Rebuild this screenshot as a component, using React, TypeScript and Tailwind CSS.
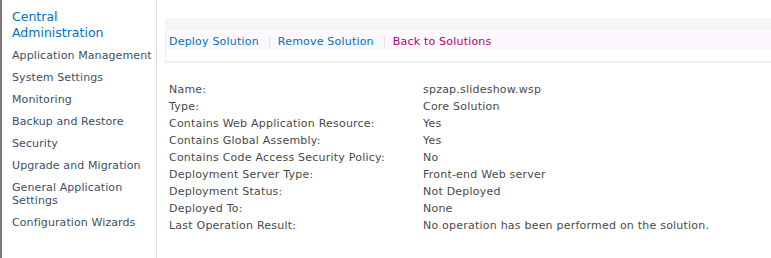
import React from "react";

const navItems: string[] = [
  "Application Management",
  "System Settings",
  "Monitoring",
  "Backup and Restore",
  "Security",
  "Upgrade and Migration",
  "General Application Settings",
  "Configuration Wizards",
];

const rows: [string, string][] = [
  ["Name:", "spzap.slideshow.wsp"],
  ["Type:", "Core Solution"],
  ["Contains Web Application Resource:", "Yes"],
  ["Contains Global Assembly:", "Yes"],
  ["Contains Code Access Security Policy:", "No"],
  ["Deployment Server Type:", "Front-end Web server"],
  ["Deployment Status:", "Not Deployed"],
  ["Deployed To:", "None"],
  ["Last Operation Result:", "No operation has been performed on the solution."],
];

export default function App() {
  return (
    <div
      className="flex h-[258px] w-[771px] overflow-hidden border-l-2 border-[#7a7a7a] bg-white"
      style={{ fontFamily: '"DejaVu Sans", Verdana, sans-serif' }}
    >
      <nav className="w-[155px] shrink-0 border-r border-[#dcdcdc] pl-[10px] pt-[9px]">
        <div className="text-[12.5px] leading-[16px] text-[#0072bc]">
          Central
          <br />
          Administration
        </div>
        <ul className="mt-[8px] flex flex-col gap-[9px] pr-[2px]">
          {navItems.map((item) => (
            <li key={item} className="text-[11px] leading-[13px] tracking-[0.1px] text-[#3b4f65]">
              {item}
            </li>
          ))}
        </ul>
      </nav>
      <main className="flex-1 pl-[8px] pt-[18px]">
        <div className="border-b-2 border-[#efefef]">
          <div className="h-[12px] bg-[#f5f5f5]" />
          <div className="h-px bg-[#fbfbfb]" />
          <div className="border-l border-[#f3eef3]">
            <div className="flex h-[19px] items-center bg-[#fdf8fd] pl-[3px] pt-[2px] text-[11px] leading-[13px] tracking-[0.2px]">
              <span className="text-[#0072bc]">Deploy Solution</span>
              <span className="ml-[10px] mr-[8px] h-[12px] w-px bg-[#ebe0eb]" />
              <span className="text-[#0072bc]">Remove Solution</span>
              <span className="ml-[10px] mr-[8px] h-[12px] w-px bg-[#ebe0eb]" />
              <span className="text-[#b3006b]">Back to Solutions</span>
            </div>
            <div className="h-[11px]" />
          </div>
        </div>
        <div className="mt-[18px] pl-[4px] text-[11px] leading-[17px] tracking-[0.22px] text-[#4a4a4a]">
          {rows.map(([label, value]) => (
            <div key={label} className="flex">
              <div className="w-[254px] shrink-0">{label}</div>
              <div>{value}</div>
            </div>
          ))}
        </div>
      </main>
    </div>
  );
}
